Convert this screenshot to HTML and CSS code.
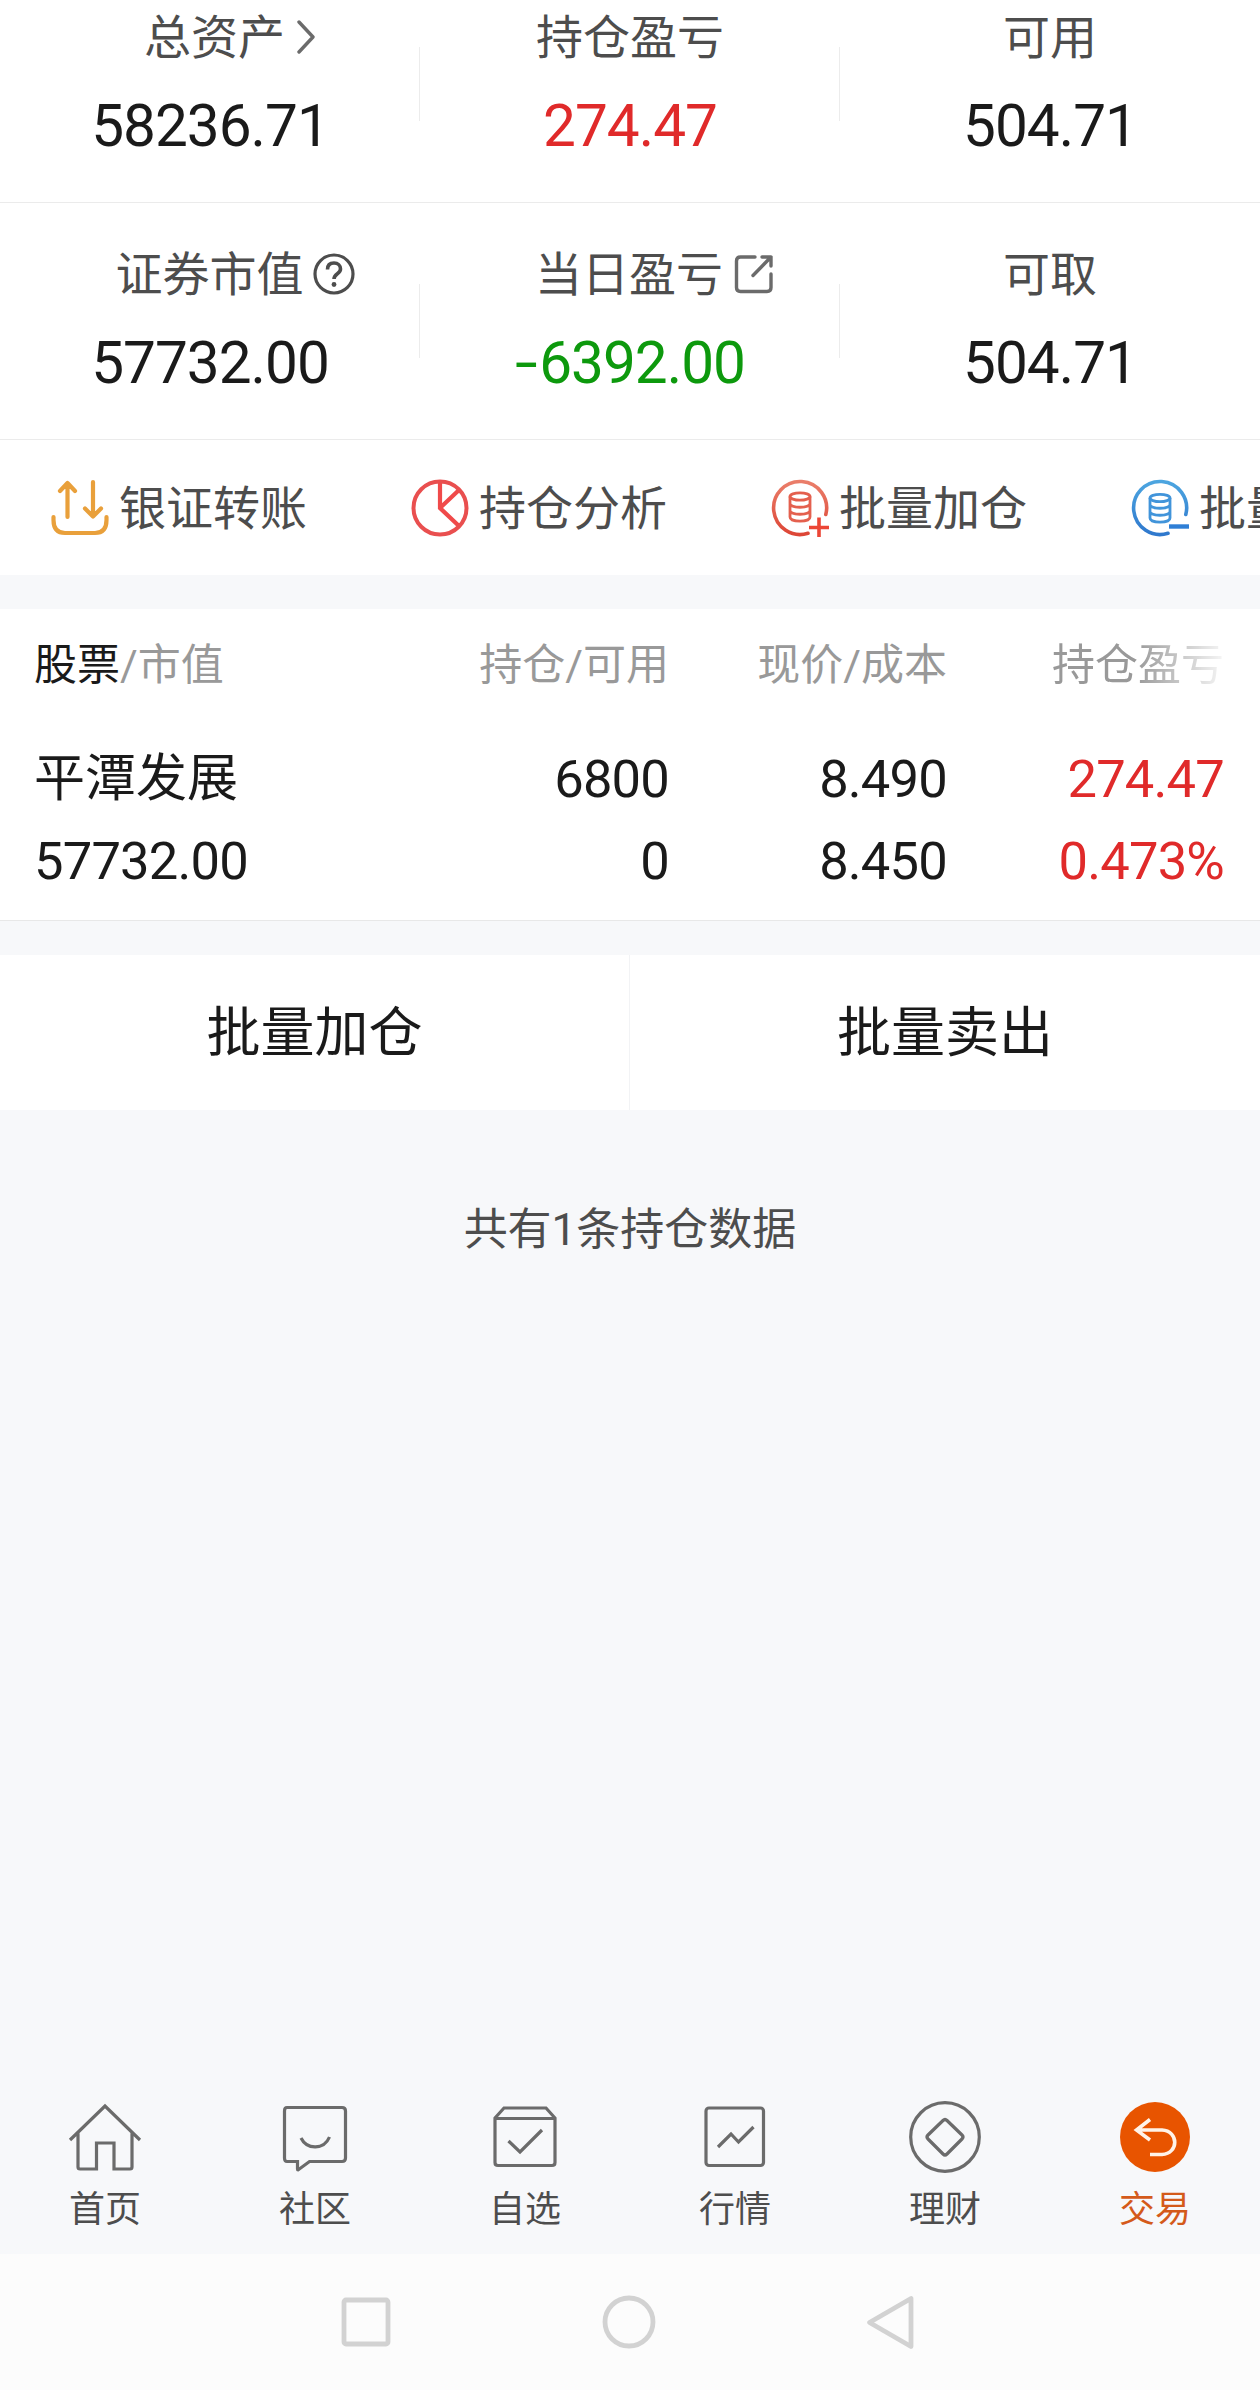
FILE: index.html
```html
<!DOCTYPE html>
<html lang="zh-CN">

<head>
  <meta charset="utf-8">
  <title>持仓</title>
  <link rel="stylesheet" href="styles.css">
</head>

<body>
  <section class="stats">
    <div class="stats-row first">
      <div class="stat">
        <div class="label with-arrow">总资产
          <svg width="19" height="34" viewBox="0 0 19 34"><path d="M2 2L16 17L2 32" fill="none" stroke="#6b6b6b" stroke-width="3.400" stroke-linecap="round" stroke-linejoin="round"/></svg>
        </div>
        <div class="value">58236.71</div>
      </div>
      <i class="divider"></i>
      <div class="stat">
        <div class="label">持仓盈亏</div>
        <div class="value red">274.47</div>
      </div>
      <i class="divider"></i>
      <div class="stat">
        <div class="label">可用</div>
        <div class="value">504.71</div>
      </div>
    </div>
    <div class="stats-row">
      <div class="stat">
        <div class="label with-icon">证券市值
          <svg width="42" height="42" viewBox="0 0 42 42"><circle cx="21" cy="21" r="19" fill="none" stroke="#4d4d4d" stroke-width="3.200"/><path d="M14.5 16.5C14.5 12 17 10 21 10C25 10 27.500 12.500 27.500 16C27.500 21 21 20.500 21 26" fill="none" stroke="#4d4d4d" stroke-width="3.600"/><circle cx="21" cy="31.500" r="2.400" fill="#4d4d4d"/></svg>
        </div>
        <div class="value">57732.00</div>
      </div>
      <i class="divider"></i>
      <div class="stat">
        <div class="label with-export">当日盈亏
          <svg width="40" height="40" viewBox="0 0 40 40"><path d="M21 3H6.500C4 3 2.500 4.500 2.500 7V33.500C2.500 36 4 37.500 6.500 37.500H33C35.500 37.500 37 36 37 33.500V20M28 3H37V12M37 3L19 21.500" fill="none" stroke="#6b6b6b" stroke-width="3.400" stroke-linecap="round" stroke-linejoin="round"/></svg>
        </div>
        <div class="value green"><span class="minus">-</span>6392.00</div>
      </div>
      <i class="divider"></i>
      <div class="stat">
        <div class="label">可取</div>
        <div class="value">504.71</div>
      </div>
    </div>
  </section>

  <section class="actions">
    <div class="action">
      <svg width="58" height="58" viewBox="0 0 58 58"><path d="M2.500 38V41C2.500 50 7 54 14 54H44C51 54 55.500 50 55.500 41V38M16.500 38V4M9 12L16.500 4L24 12M42 3V37M34 29.500L42 37.500L50 29.500" fill="none" stroke="#e9a03b" stroke-width="4.200" stroke-linecap="round" stroke-linejoin="round"/></svg>
      <span>银证转账</span>
    </div>
    <div class="action">
      <svg width="58" height="58" viewBox="0 0 58 58"><path d="M29 2V29L48 47M29 29L48 11" fill="none" stroke="#f04a4a" stroke-width="4.200"/><circle cx="29" cy="29" r="26.500" fill="none" stroke="#e94f4f" stroke-width="4"/></svg>
      <span>持仓分析</span>
    </div>
    <div class="action">
      <svg width="58" height="58" viewBox="0 0 58 58">
        <defs><linearGradient id="redGrad" x1="0" y1="0" x2="0" y2="1"><stop offset="0" stop-color="#ea7e6a"/><stop offset="1" stop-color="#dd4636"/></linearGradient></defs>
        <path d="M37 54.300A26.500 26.500 0 1 1 54.800 35.500" fill="none" stroke="url(#redGrad)" stroke-width="3.600" stroke-linecap="round"/>
        <g fill="none" stroke="#e4604e" stroke-width="2.800"><ellipse cx="29" cy="17.500" rx="10" ry="3.700"/><path d="M19 17.500V38C19 43.500 39 43.500 39 38V17.500M19 24.500C19 29.500 39 29.500 39 24.500M19 31.500C19 36.500 39 36.500 39 31.500"/></g>
        <path d="M48 38.500V58M38 48.500H58" stroke="#ec4636" stroke-width="3.600"/>
      </svg>
      <span>批量加仓</span>
    </div>
    <div class="action">
      <svg width="58" height="58" viewBox="0 0 58 58">
        <defs><linearGradient id="blueGrad" x1="0" y1="0" x2="0" y2="1"><stop offset="0" stop-color="#4ca5e0"/><stop offset="1" stop-color="#2f78cd"/></linearGradient></defs>
        <path d="M37 54.300A26.500 26.500 0 1 1 54.800 35.500" fill="none" stroke="url(#blueGrad)" stroke-width="3.600" stroke-linecap="round"/>
        <g fill="none" stroke="#4194da" stroke-width="2.800"><ellipse cx="29" cy="19" rx="10" ry="3.700"/><path d="M19 19V39C19 44.500 39 44.500 39 39V19M19 25.500C19 30.500 39 30.500 39 25.500M19 32.500C19 37.500 39 37.500 39 32.500"/></g>
        <path d="M38 47.500H58" stroke="#2f7fd6" stroke-width="4.400"/>
      </svg>
      <span>批量卖出</span>
    </div>
  </section>

  <section class="holdings">
    <div class="grid head">
      <span><b>股票</b>/市值</span>
      <span>持仓/可用</span>
      <span>现价/成本</span>
      <span class="fade">持仓盈亏</span>
    </div>
    <div class="grid line">
      <span class="name">平潭发展</span>
      <span>6800</span>
      <span>8.490</span>
      <span class="red">274.47</span>
    </div>
    <div class="grid line">
      <span>57732.00</span>
      <span>0</span>
      <span>8.450</span>
      <span class="red">0.473%</span>
    </div>
  </section>

  <section class="batch">
    <div>批量加仓</div>
    <div>批量卖出</div>
  </section>

  <p class="total">共有1条持仓数据</p>

  <nav class="tabs">
    <div class="tab">
      <svg width="74" height="74" viewBox="0 0 74 74"><path d="M2 40L37 6L72 40M10 32V67Q10 69 12 69H28.500V43H46V69H62Q64 69 64 67V32" /></svg>
      <span>首页</span>
    </div>
    <div class="tab">
      <svg width="74" height="74" viewBox="0 0 74 74"><path d="M9 7.500H64Q67.500 7.500 67.500 11V58Q67.500 61.500 64 61.500H31.500L20 70Q19.500 70 19.500 69V61.500H9Q6.500 61.500 6.500 58V11Q6.500 7.500 9 7.500ZM23 38C29 50 46 50 51.500 37"/></svg>
      <span>社区</span>
    </div>
    <div class="tab">
      <svg width="74" height="74" viewBox="0 0 74 74"><path d="M7 18L16 8H58L67 18V62.500Q67 65.500 64 65.500H10Q7 65.500 7 62.500ZM7 18.500H67M20.500 41L32 52L54 30"/></svg>
      <span>自选</span>
    </div>
    <div class="tab">
      <svg width="74" height="74" viewBox="0 0 74 74"><rect x="8" y="8" width="57.500" height="57.500" rx="3"/><path d="M20 47L33 34L40.500 42L55.500 27"/></svg>
      <span>行情</span>
    </div>
    <div class="tab">
      <svg width="74" height="74" viewBox="0 0 74 74"><circle cx="37" cy="37" r="34.300"/><path d="M35 20.500Q37 18.500 39 20.500L54 35Q56 37 54 39L39 54Q37 56 35 54L20 39Q18 37 20 35Z"/></svg>
      <span>理财</span>
    </div>
    <div class="tab active">
      <svg width="74" height="74" viewBox="0 0 74 74"><circle class="disc" cx="37" cy="37" r="35"/><path class="arrow" d="M32 19.500L18.500 30L32 40M18.500 30H44C61 31 61 53.500 44 54.500H32"/></svg>
      <span>交易</span>
    </div>
  </nav>

  <footer class="system">
    <svg width="54" height="56" viewBox="0 0 54 56"><rect x="5" y="6" width="44" height="44" rx="2"/></svg>
    <svg width="54" height="56" viewBox="0 0 54 56"><circle cx="27" cy="28" r="24"/></svg>
    <svg width="54" height="56" viewBox="0 0 54 56"><path d="M4.500 28.500L46 4.500V52.500Z"/></svg>
  </footer>
</body>

</html>
```
FILE: styles.css
```css
* {
  box-sizing: border-box;
}

body {
  margin: 0;
  width: 1260px;
  height: 2390px;
  display: flex;
  flex-direction: column;
  overflow: hidden;
  background-color: #f7f8fa;
  color: #1a1a1a;
  font-family: Roboto, "Noto Sans CJK SC", sans-serif;
}

svg {
  display: block;
  flex: none;
}

.red {
  color: #e02a2a;
}

.green {
  color: #0d990d;
}

.stats, .actions, .holdings, .batch {
  flex: none;
  background-color: #fff;
}

.stats-row {
  display: flex;
  align-items: flex-end;
  height: 237px;
  border-bottom: 1px solid #ebebeb;
}

.stats-row.first {
  height: 203px;
}

.stat {
  flex: 1;
  padding-bottom: 41px;
}

.divider {
  width: 1px;
  height: 74px;
  margin: 0 0 81px -1px;
  background-color: #ececec;
}

.label {
  display: flex;
  justify-content: center;
  align-items: center;
  gap: 9px;
  height: 60px;
  margin-bottom: 23px;
  font-size: 47px;
  line-height: 60px;
  color: #4d4d4d;
}

.label svg {
  margin-top: -2px;
}

.with-arrow {
  gap: 12px;
  padding-left: 40px;
}

.with-icon {
  padding-left: 50px;
}

.with-export {
  gap: 11px;
  padding-left: 49px;
}

.value {
  height: 70px;
  font-size: 58.5px;
  line-height: 70px;
  letter-spacing: -1px;
  text-align: center;
}

.minus {
  display: inline-block;
  margin: 0 6px 0 3px;
  transform: scaleX(1.4);
}

.actions {
  display: flex;
  align-items: center;
  height: 135px;
  padding-left: 51px;
  overflow: hidden;
}

.action {
  display: flex;
  flex: none;
  align-items: center;
  gap: 10px;
  width: 360px;
  font-size: 47px;
  line-height: 60px;
  color: #4d4d4d;
  white-space: nowrap;
}

.action span {
  padding-top: 2px;
}

.holdings {
  height: 312px;
  margin-top: 34px;
  padding: 26px 36px 0 34px;
  border-bottom: 1px solid #e8e8e8;
}

.grid {
  display: grid;
  grid-template-columns: 341px 294px 278px 277px;
  text-align: right;
  white-space: nowrap;
}

.grid span:first-child {
  text-align: left;
}

.head {
  height: 103px;
  font-size: 43px;
  line-height: 60px;
  color: #999;
}

.head b {
  font-weight: 400;
  color: #1a1a1a;
}

.fade {
  -webkit-mask-image: linear-gradient(to right, #000 68%, transparent 103%);
  mask-image: linear-gradient(to right, #000 68%, transparent 103%);
}

.line {
  height: 82px;
  font-size: 52.5px;
  line-height: 82px;
  letter-spacing: -0.8px;
}

.name {
  font-size: 51px;
  letter-spacing: 0;
}

.batch {
  display: flex;
  height: 155px;
  margin-top: 34px;
}

.batch div {
  flex: 1;
  padding-top: 2px;
  font-size: 54px;
  line-height: 153px;
  text-align: center;
}

.batch div:first-child {
  flex: none;
  width: 630px;
  border-right: 1px solid #f2f3f5;
}

.batch div + div {
  padding-top: 2px;
}

.total {
  margin: 90px 0 0;
  font-size: 44px;
  line-height: 60px;
  text-align: center;
  color: #4d4d4d;
}

.tabs {
  display: flex;
  margin-top: auto;
  height: 154px;
  flex: none;
}

.tab {
  display: flex;
  flex: 1;
  flex-direction: column;
  align-items: center;
  gap: 11px;
  font-size: 36px;
  line-height: 50px;
  color: #4d4d4d;
}

.tab svg {
  fill: none;
  stroke: #6b6b6b;
  stroke-width: 3.2;
}

.active {
  color: #d45a1a;
}

.tab .disc {
  fill: #e85400;
  stroke: none;
}

.tab .arrow {
  stroke: #fff3e8;
  stroke-width: 3.6;
}

.system {
  display: flex;
  flex: none;
  justify-content: center;
  gap: 209px;
  height: 136px;
  padding: 40px 2px 0 0;
  background-color: #fcfcfc;
}

.system svg {
  fill: none;
  stroke: #d2d2d2;
  stroke-width: 4.8;
  stroke-linejoin: round;
}
```
